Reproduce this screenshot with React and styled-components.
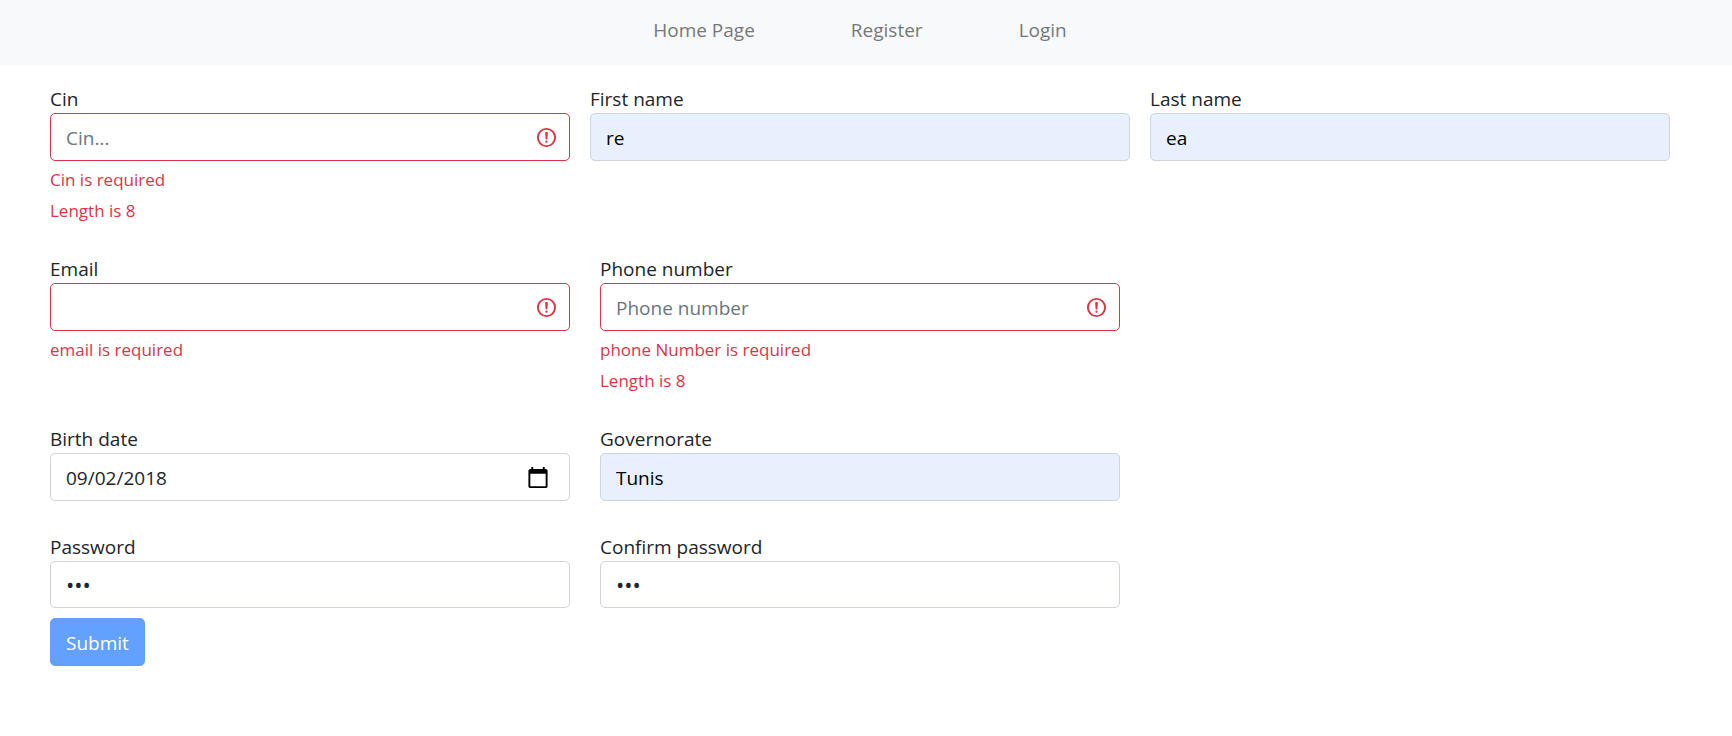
import React, { useId, useState } from "react";
import styled, { createGlobalStyle, css } from "styled-components";

const GlobalStyle = createGlobalStyle`
  *, *::before, *::after { box-sizing: border-box; }
  body {
    margin: 0;
    background: #fff;
    color: #212529;
    font-family: "Segoe UI", "Open Sans", "Noto Sans", sans-serif;
    font-size: 19px;
    line-height: 30px;
  }
`;

const NavBar = styled.nav`
  display: flex;
  justify-content: center;
  gap: 96px;
  padding: 15px 12px 20px 0;
  background: #f8f9fb;
`;

const NavLink = styled.a`
  color: #777879;
  text-decoration: none;
`;

const Form = styled.form`
  padding: 18px 47px 20px 35px;
`;

const Row = styled.div`
  display: grid;
  grid-template-columns: repeat(3, 1fr);
  margin-bottom: ${(p) => (p.$last ? 10 : 30)}px;
`;

const Column = styled.div`
  padding: 0 ${(p) => (p.$wide ? 5 : 15)}px;
`;

const Label = styled.label`
  display: block;
  height: 30px;
  line-height: 32px;
`;

const Control = styled.div`
  position: relative;
`;

const Input = styled.input`
  display: block;
  width: 100%;
  height: 48px;
  padding: 2px 15px 0;
  border: 1px solid #ced4da;
  border-radius: 5px;
  background: #fff;
  color: #212529;
  font: inherit;
  outline: none;

  &::placeholder {
    color: #6c757d;
    opacity: 1;
  }

  ${(p) => p.$filled && css`
    background: #e8f0fe;
    color: #000;
  `}

  ${(p) => p.$invalid && css`
    border-color: #dc3545;
    padding-right: 48px;
  `}

  &[type="password"] {
    height: 47px;
    padding: 0 15px 2px;
    font-size: 22px;
  }

  &[type="date"]::-webkit-datetime-edit,
  &[type="date"]::-webkit-datetime-edit-fields-wrapper,
  &[type="date"]::-webkit-datetime-edit-month-field,
  &[type="date"]::-webkit-datetime-edit-day-field,
  &[type="date"]::-webkit-datetime-edit-year-field {
    padding: 0;
  }

  &[type="date"]::-webkit-calendar-picker-indicator {
    width: 24px;
    height: 24px;
    margin-right: 2px;
  }
`;

const WarningIcon = styled.svg`
  position: absolute;
  top: 13px;
  right: 12px;
  width: 23px;
  height: 23px;
  pointer-events: none;
`;

const Feedback = styled.div`
  padding-top: 7px;
  color: #dc3545;
  font-size: 17px;
  line-height: 24px;
`;

const SubmitButton = styled.button`
  height: 48px;
  margin-left: 15px;
  padding: 2px 15px 0;
  border: 1px solid #62a1ff;
  border-radius: 5px;
  background: #62a1ff;
  color: #fff;
  font: inherit;
`;

function Field({ label, errors = [], value: initial = "", wide, filled, ...rest }) {
  const id = useId();
  const [value, setValue] = useState(initial);
  const invalid = errors.length > 0;
  return (
    <Column $wide={wide}>
      <Label htmlFor={id}>{label}</Label>
      <Control>
        <Input
          id={id}
          value={value}
          onChange={(e) => setValue(e.target.value)}
          aria-invalid={invalid}
          $invalid={invalid}
          $filled={filled}
          {...rest}
        />
        {invalid && (
          <WarningIcon viewBox="0 0 12 12" fill="none" stroke="#dc3545" aria-hidden="true">
            <circle cx="6" cy="6" r="4.5" />
            <path strokeLinejoin="round" d="M5.8 3.6h.4L6 6.5z" />
            <circle cx="6" cy="8.2" r=".6" fill="#dc3545" stroke="none" />
          </WarningIcon>
        )}
      </Control>
      {errors.map((e) => (
        <Feedback key={e}>{e}</Feedback>
      ))}
    </Column>
  );
}

export default function App() {
  return (
    <>
      <GlobalStyle />
      <NavBar>
        <NavLink href="#home">Home Page</NavLink>
        <NavLink href="#register">Register</NavLink>
        <NavLink href="#login">Login</NavLink>
      </NavBar>
      <Form onSubmit={(e) => e.preventDefault()} noValidate>
        <Row>
          <Field label="Cin" placeholder="Cin..." errors={["Cin is required", "Length is 8"]} />
          <Field label="First name" value="re" filled wide />
          <Field label="Last name" value="ea" filled />
        </Row>
        <Row>
          <Field label="Email" type="email" errors={["email is required"]} />
          <Field
            label="Phone number"
            placeholder="Phone number"
            errors={["phone Number is required", "Length is 8"]}
          />
        </Row>
        <Row>
          <Field label="Birth date" type="date" value="2018-09-02" />
          <Field label="Governorate" value="Tunis" filled />
        </Row>
        <Row $last>
          <Field label="Password" type="password" value="abc" />
          <Field label="Confirm password" type="password" value="abc" />
        </Row>
        <SubmitButton type="submit" disabled>Submit</SubmitButton>
      </Form>
    </>
  );
}
